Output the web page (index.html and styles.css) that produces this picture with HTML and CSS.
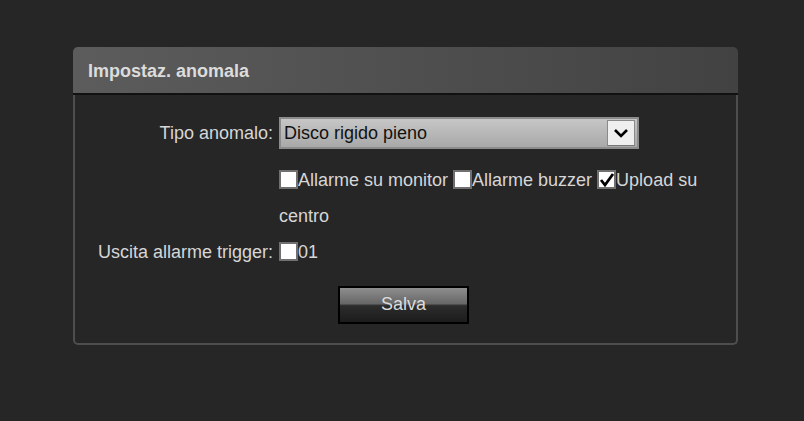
FILE: index.html
```html
<!DOCTYPE html>
<html lang="it">
<head>
	<meta charset="UTF-8">
	<title>Impostaz. anomala</title>
	<link rel="stylesheet" href="styles.css">
</head>
<body>
	<div class="panel">
		<div class="panel-head">Impostaz. anomala</div>
		<div class="panel-body">
			<div class="form">
				<label class="lbl row-select">Tipo anomalo:</label>
				<div class="val row-select">
					<div class="select">
						<span class="select-text">Disco rigido pieno</span>
						<span class="select-arrow">
							<svg width="16" height="10" viewBox="0 0 16 10"><path d="M2 2 L8 8 L14 2" fill="none" stroke="#000" stroke-width="2.6"/></svg>
						</span>
					</div>
				</div>

				<div class="lbl"></div>
				<div class="val checks">
					<span class="cb"></span>Allarme su monitor <span class="cb"></span>Allarme buzzer <span class="cb on"><svg width="16" height="16" viewBox="0 0 16 16"><path d="M2 8 L6 13 L14 2" fill="none" stroke="#000" stroke-width="2.8"/></svg></span>Upload su centro
				</div>

				<label class="lbl">Uscita allarme trigger:</label>
				<div class="val"><span class="cb"></span>01</div>
			</div>
			<div class="actions">
				<a href="javascript:;" class="btn">Salva</a>
			</div>
		</div>
	</div>
</body>
</html>
```

FILE: styles.css
```css
* {
	margin: 0;
	padding: 0;
	box-sizing: border-box;
}
body {
	background: #262626;
	font-family: "Liberation Sans", Arial, sans-serif;
	font-size: 18px;
	color: #d6d6d6;
	padding: 47px 0 0 73px;
}
.panel {
	width: 665px;
}
.panel-head {
	height: 48px;
	padding: 14px 0 0 15px;
	font-weight: bold;
	color: #dcdcdc;
	background: linear-gradient(to right, #5c5c5c, #424242);
	border-radius: 5px 5px 0 0;
	border-bottom: 2px solid #111;
}
.panel-body {
	border: 2px solid #4e4e4e;
	border-top: none;
	border-radius: 0 0 5px 5px;
	padding: 22px 0 19px 1px;
}
.form {
	display: grid;
	grid-template-columns: 197px 430px;
	column-gap: 6px;
	line-height: 36px;
}
.lbl {
	text-align: right;
}
.row-select {
	height: 32px;
	line-height: 32px;
	margin-bottom: 13px;
}
.select {
	width: 360px;
	height: 32px;
	border: 2px solid #8c8c8c;
	background: linear-gradient(#c6c6c6, #a9a9a9);
	color: #111;
	display: flex;
	align-items: center;
	justify-content: space-between;
	padding: 0 2px 0 3px;
	line-height: 28px;
}
.select-arrow {
	width: 28px;
	height: 26px;
	background: #efefef;
	border: 1px solid #8a8a8a;
	border-bottom-color: #777;
	display: flex;
	align-items: center;
	justify-content: center;
}
.cb {
	display: inline-block;
	width: 19px;
	height: 19px;
	background: #fff;
	border: 2px solid #707070;
	vertical-align: -3px;
	position: relative;
}
.cb svg {
	position: absolute;
	left: 0;
	top: 0;
}
.actions {
	display: flex;
	padding: 16px 0 0 262px;
}
.btn {
	display: block;
	width: 131px;
	height: 38px;
	border: 2px solid #000;
	background: linear-gradient(#8e8e8e 0%, #676767 46%, #2c2c2c 52%, #1c1c1c 100%);
	color: #dcdcdc;
	text-decoration: none;
	text-align: center;
	line-height: 32px;
}
```
